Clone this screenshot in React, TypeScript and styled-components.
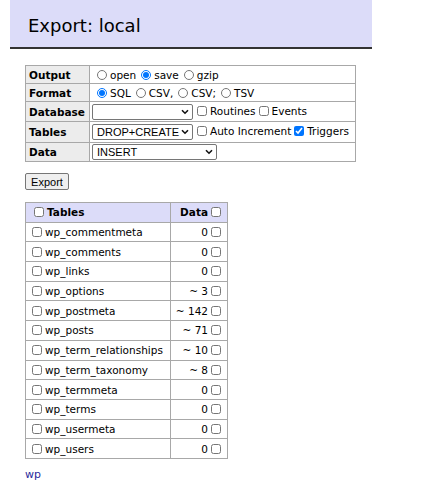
import React from 'react';
import styled, { createGlobalStyle } from 'styled-components';

const GlobalStyle = createGlobalStyle`
  body {
    margin: 0;
    background: #fff;
    color: #000;
    font-family: "DejaVu Sans", Verdana, sans-serif;
    font-size: 10.5px;
  }
`;

const Page = styled.div`
  padding-bottom: 20px;
`;

const Header = styled.h1`
  margin: 0 0 0 10px;
  width: 362px;
  height: 49px;
  box-sizing: border-box;
  padding: 15px 0 0 18px;
  background: #dcdcf9;
  border-bottom: 2px solid #333;
  font-size: 18px;
  font-weight: normal;
  line-height: 21px;
`;

const Content = styled.div`
  padding: 16px 0 0 25px;
`;

const OptionsTable = styled.table`
  border-collapse: collapse;
  width: 331px;
  border: 1px solid #a8a8a8;

  th,
  td {
    border: 1px solid #a8a8a8;
    padding: 0 3px 0 2px;
    white-space: nowrap;
  }

  th {
    width: 57px;
    padding-left: 3px;
    background: #ececec;
    text-align: left;
    font-weight: bold;
  }
`;

const Row = styled.tr<{ $h: number }>`
  height: ${(p) => p.$h}px;
`;

const Radio = styled.input.attrs({ type: 'radio' })`
  width: 10px;
  height: 10px;
  margin: 0 3px 0 5px;
  vertical-align: -1px;
`;

const Check = styled.input.attrs({ type: 'checkbox' })<{ $ml?: number }>`
  width: 10px;
  height: 10px;
  margin: 0 3px 0 ${(p) => p.$ml ?? 4}px;
  vertical-align: -1px;
`;

const SelectWrap = styled.span`
  position: relative;
  display: inline-block;
  vertical-align: middle;
  line-height: 0;
`;

const Select = styled.select<{ $w: number }>`
  appearance: none;
  width: ${(p) => p.$w}px;
  height: 16px;
  margin: 0;
  padding: 0 12px 0 4px;
  font-family: "Liberation Sans", Arial, sans-serif;
  font-size: 11px;
  line-height: 14px;
  border: 1px solid #767676;
  border-radius: 2px;
  background: #fff;
  color: #000;
`;

const Chevron = styled.svg`
  position: absolute;
  right: 4px;
  top: 5px;
  width: 8px;
  height: 6px;
  pointer-events: none;
`;

const ExportButton = styled.button`
  display: block;
  margin: 11px 0 12px;
  width: 44px;
  height: 17px;
  padding: 0;
  font-family: "Liberation Sans", Arial, sans-serif;
  font-size: 11px;
  color: #000;
  background: #efefef;
  border: 1px solid #767676;
  border-radius: 2px;
`;

const ListTable = styled.table`
  border-collapse: collapse;
  width: 203px;
  border: 1px solid #a8a8a8;

  th,
  td {
    border: 1px solid #a8a8a8;
    padding: 0 3px;
    white-space: nowrap;
    height: 18.7px;
  }

  thead th {
    background: #dcdcf9;
    font-weight: bold;
  }
`;

const NameCell = styled.td`
  text-align: left;
  width: 138px;
`;

const DataCell = styled.td`
  text-align: right;
`;

const DbLink = styled.a`
  display: inline-block;
  margin-top: 9px;
  color: #2a2a9c;
  text-decoration: none;
  font-size: 11px;
`;

const tables: [string, string][] = [
  ['wp_commentmeta', '0'],
  ['wp_comments', '0'],
  ['wp_links', '0'],
  ['wp_options', '~ 3'],
  ['wp_postmeta', '~ 142'],
  ['wp_posts', '~ 71'],
  ['wp_term_relationships', '~ 10'],
  ['wp_term_taxonomy', '~ 8'],
  ['wp_termmeta', '0'],
  ['wp_terms', '0'],
  ['wp_usermeta', '0'],
  ['wp_users', '0'],
];

const Dropdown: React.FC<{ width: number; options: string[] }> = ({ width, options }) => (
  <SelectWrap>
    <Select $w={width} defaultValue={options[0]}>
      {options.map((o) => (
        <option key={o}>{o}</option>
      ))}
    </Select>
    <Chevron viewBox="0 0 8 6">
      <path d="M1 1.2 L4 4.2 L7 1.2" fill="none" stroke="#111" strokeWidth="1.6" />
    </Chevron>
  </SelectWrap>
);

const App: React.FC = () => {
  return (
    <Page>
      <GlobalStyle />
      <Header>Export: local</Header>
      <Content>
        <form onSubmit={(e) => e.preventDefault()}>
          <OptionsTable>
            <tbody>
              <Row $h={18}>
                <th>Output</th>
                <td>
                  <label><Radio name="output" />open</label>
                  <label><Radio name="output" defaultChecked />save</label>
                  <label><Radio name="output" />gzip</label>
                </td>
              </Row>
              <Row $h={18}>
                <th>Format</th>
                <td>
                  <label><Radio name="format" defaultChecked />SQL</label>
                  <label><Radio name="format" />CSV,</label>
                  <label><Radio name="format" />CSV;</label>
                  <label><Radio name="format" />TSV</label>
                </td>
              </Row>
              <Row $h={20}>
                <th>Database</th>
                <td>
                  <Dropdown width={101} options={['']} />
                  <label><Check />Routines</label>
                  <label><Check $ml={3} />Events</label>
                </td>
              </Row>
              <Row $h={21}>
                <th>Tables</th>
                <td>
                  <Dropdown width={101} options={['DROP+CREATE', 'DROP', 'CREATE']} />
                  <label><Check />Auto Increment</label>
                  <label><Check $ml={3} defaultChecked />Triggers</label>
                </td>
              </Row>
              <Row $h={19}>
                <th>Data</th>
                <td>
                  <Dropdown width={125} options={['INSERT', 'UPDATE', 'INSERT+UPDATE']} />
                </td>
              </Row>
            </tbody>
          </OptionsTable>

          <ExportButton type="submit">Export</ExportButton>

          <ListTable>
            <thead>
              <tr>
                <NameCell as="th">
                  <Check $ml={5} />Tables
                </NameCell>
                <DataCell as="th">
                  Data<Check $ml={3} />
                </DataCell>
              </tr>
            </thead>
            <tbody>
              {tables.map(([name, rows]) => (
                <tr key={name}>
                  <NameCell>
                    <label><Check $ml={3} />{name}</label>
                  </NameCell>
                  <DataCell>
                    {rows}<Check $ml={3} />
                  </DataCell>
                </tr>
              ))}
            </tbody>
          </ListTable>
        </form>
        <DbLink href="#">wp</DbLink>
      </Content>
    </Page>
  );
};

export default App;
